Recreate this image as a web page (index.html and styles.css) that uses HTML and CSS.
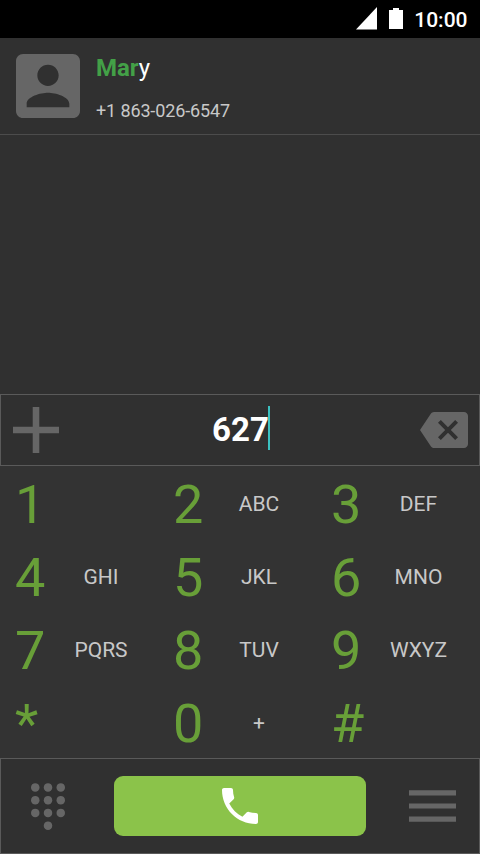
FILE: index.html
```html
<!DOCTYPE html>
<html lang="en">
<head>
<meta charset="utf-8">
<title>Dialer</title>
<link rel="stylesheet" href="styles.css">
</head>
<body>
<header class="status">
  <svg class="signal" viewBox="0 0 22 24"><path d="M0 23.5 21 1v22.5z"/></svg>
  <svg class="battery" viewBox="0 0 14 21"><path d="M0 2h4V0h6v2h4v19H0z"/></svg>
  <time class="clock">10:00</time>
</header>
<main class="results">
  <div class="contact">
    <svg class="avatar" viewBox="3 3 18 18"><path d="M3 5v14c0 1.1.89 2 2 2h14c1.1 0 2-.9 2-2V5c0-1.1-.9-2-2-2H5c-1.11 0-2 .9-2 2zm12 4c0 1.66-1.34 3-3 3s-3-1.34-3-3 1.34-3 3-3 3 1.34 3 3zm-9 8c0-2 4-3.1 6-3.1s6 1.1 6 3.1v1H6v-1z"/></svg>
    <div class="details">
      <div class="name"><b>Mar</b>y</div>
      <div class="phone">+1 863-026-6547</div>
    </div>
  </div>
</main>
<section class="entry">
  <svg class="add" viewBox="5 5 14 14"><path d="M19 13h-6v6h-2v-6H5v-2h6V5h2v6h6z"/></svg>
  <div class="number">627<span class="caret"></span></div>
  <svg class="erase" viewBox="0 0 24 24"><path d="M22 3H7c-.69 0-1.23.35-1.59.88L0 12l5.41 8.11c.36.53.9.89 1.59.89h15c1.1 0 2-.9 2-2V5c0-1.1-.9-2-2-2zm-3 12.59L17.59 17 14 13.41 10.41 17 9 15.59 12.59 12 9 8.41 10.41 7 14 10.59 17.59 7 19 8.41 15.41 12 19 15.59z"/></svg>
</section>
<section class="keypad">
  <div class="key"><span class="digit">1</span></div>
  <div class="key"><span class="digit">2</span><span class="letters">ABC</span></div>
  <div class="key"><span class="digit">3</span><span class="letters">DEF</span></div>
  <div class="key"><span class="digit">4</span><span class="letters">GHI</span></div>
  <div class="key"><span class="digit">5</span><span class="letters">JKL</span></div>
  <div class="key"><span class="digit">6</span><span class="letters">MNO</span></div>
  <div class="key"><span class="digit">7</span><span class="letters">PQRS</span></div>
  <div class="key"><span class="digit">8</span><span class="letters">TUV</span></div>
  <div class="key"><span class="digit">9</span><span class="letters">WXYZ</span></div>
  <div class="key"><span class="digit">*</span></div>
  <div class="key"><span class="digit">0</span><span class="letters">+</span></div>
  <div class="key"><span class="digit">#</span></div>
</section>
<footer class="actions">
  <svg class="dialpad" viewBox="4 1 16 22"><circle cx="6" cy="3" r="2"/><circle cx="12" cy="3" r="2"/><circle cx="18" cy="3" r="2"/><circle cx="6" cy="9" r="2"/><circle cx="12" cy="9" r="2"/><circle cx="18" cy="9" r="2"/><circle cx="6" cy="15" r="2"/><circle cx="12" cy="15" r="2"/><circle cx="18" cy="15" r="2"/><circle cx="12" cy="21" r="2"/></svg>
  <div class="call"><svg viewBox="0 0 24 24"><path d="M6.62 10.79c1.44 2.83 3.76 5.14 6.59 6.59l2.2-2.2c.27-.27.67-.36 1.02-.24 1.12.37 2.33.57 3.57.57.55 0 1 .45 1 1V20c0 .55-.45 1-1 1-9.39 0-17-7.61-17-17 0-.55.45-1 1-1h3.5c.55 0 1 .45 1 1 0 1.25.2 2.45.57 3.57.11.35.03.74-.25 1.02l-2.2 2.2z"/></svg></div>
  <svg class="menu" viewBox="3 6 18 12"><path d="M3 18h18v-2H3v2zm0-5h18v-2H3v2zm0-7v2h18V6H3z"/></svg>
</footer>
</body>
</html>
```
FILE: styles.css
```css
* { box-sizing: border-box; }
body {
  margin: 0;
  height: 854px;
  display: flex;
  flex-direction: column;
  overflow: hidden;
  background: #303030;
  color: #fff;
  font-family: Roboto, sans-serif;
}
svg { display: block; flex: none; fill: #666; }
.status {
  height: 38px;
  flex: none;
  display: flex;
  align-items: flex-start;
  justify-content: flex-end;
  padding-right: 12.5px;
  background: #000;
}
.signal { width: 22px; height: 24px; margin-top: 6px; fill: #fff; }
.battery { width: 14px; height: 21px; margin: 8px 11px 0; fill: #fff; }
.clock { font-size: 21px; font-weight: 500; line-height: 24px; margin-top: 8px; }
.results { flex: 1; }
.contact {
  display: flex;
  height: 97px;
  padding: 16px;
  gap: 16px;
  border-bottom: 1px solid #4c4c4c;
}
.avatar { width: 64px; height: 64px; }
.name { font-size: 24px; line-height: 28px; }
.name b { color: #43a047; }
.phone { font-size: 18px; line-height: 22px; margin-top: 18px; color: #c8c8c8; letter-spacing: -0.13px; }
.entry {
  height: 72px;
  flex: none;
  display: flex;
  align-items: center;
  padding: 0 11px 0 12px;
  border: 1px solid #5a5a5a;
}
.add { width: 46px; height: 46px; }
.number {
  flex: 1;
  display: flex;
  align-items: center;
  justify-content: center;
  padding-left: 3px;
  font-size: 33px;
  font-weight: 700;
  line-height: 44px;
}
.caret { width: 2px; height: 44px; margin: -4px 0 0 -1px; background: #3bc1c1; }
.erase { width: 48px; height: 48px; }
.keypad {
  height: 292px;
  flex: none;
  display: grid;
  grid-template-columns: repeat(3, 158px);
  grid-template-rows: repeat(4, 73px);
  padding-left: 15px;
  background: #333;
}
.key { display: flex; align-items: center; }
.digit { width: 30px; font-size: 54px; line-height: 73px; color: #689f38; padding-top: 4px; }
.letters { width: 112px; text-align: center; font-size: 21px; color: #c8c8c8; padding-top: 3px; }
.key:nth-child(3n) .letters { width: 115px; }
.actions {
  height: 96px;
  flex: none;
  display: flex;
  align-items: center;
  justify-content: space-between;
  padding: 0 23.5px 0 29.5px;
  border: 1px solid #5a5a5a;
}
.dialpad { width: 34px; height: 47px; }
.call {
  width: 252px;
  height: 60px;
  display: flex;
  align-items: center;
  justify-content: center;
  margin-left: 6px;
  border-radius: 9px;
  background: #8bc34a;
}
.call svg { width: 48px; height: 48px; fill: #fff; }
.menu { width: 47px; height: 32px; }
```
